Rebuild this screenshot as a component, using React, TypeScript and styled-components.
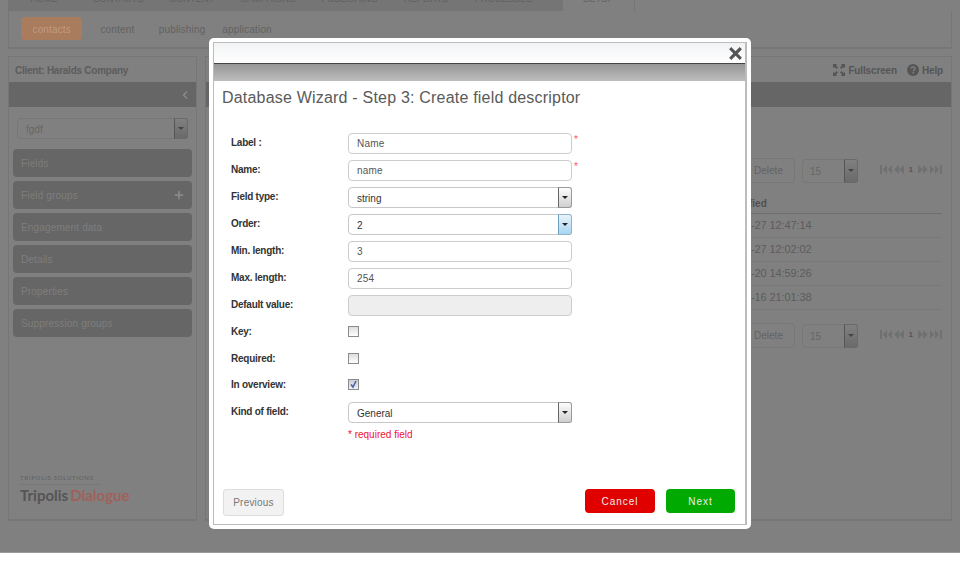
import { ChevronLeft, Plus } from 'lucide-react';
import styled, { createGlobalStyle } from 'styled-components';

const GlobalStyle = createGlobalStyle`
  html, body {
    margin: 0;
    padding: 0;
    background: #fff;
    height: 569px;
    overflow: hidden;
  }
  * {
    box-sizing: border-box;
  }
  body {
    font-family: 'Liberation Sans', Arial, sans-serif;
  }
`;

const Page = styled.div`
  position: relative;
  height: 553px;
  padding: 0 8px;
  overflow: hidden;
  border-bottom: 1px solid #999;
  background: #808080;
`;

const Nav = styled.nav`
  display: flex;
  height: 11px;
  overflow: hidden;
`;

const NavTabs = styled.div`
  display: flex;
  width: 555px;
  height: 11px;
  background: #757575;
  padding-left: 22px;
  gap: 26px;
`;

const NavTab = styled.span`
  display: block;
  margin-top: -8px;
  font-size: 9.3px;
  line-height: 14px;
  color: #606060;
  text-transform: uppercase;
  white-space: nowrap;
  &:first-child {
    margin-right: 9px;
  }
`;

const SetupTab = styled.div`
  width: 72px;
  height: 11px;
  border-right: 1px solid #767676;
  text-align: center;
  ${NavTab} {
    margin-right: 0;
  }
`;

const SubNav = styled.div`
  display: flex;
  align-items: center;
  height: 38px;
  padding: 0 12px 1px;
  border: 1px solid #767676;
  border-top: 0;
  border-bottom-width: 2px;
  border-bottom-right-radius: 2px;
`;

const SubItem = styled.span<{ $active?: boolean; $gap: number }>`
  display: flex;
  align-items: center;
  justify-content: center;
  height: 23px;
  padding: 1px ${(p) => (p.$active ? '11.5px' : '0')} 0;
  margin-right: ${(p) => p.$gap}px;
  border-radius: 4px;
  background: ${(p) => (p.$active ? '#a97c5e' : 'transparent')};
  color: ${(p) => (p.$active ? '#c09a80' : '#626262')};
  font-size: 10px;
  letter-spacing: 0.15px;
`;

const Panels = styled.div`
  display: grid;
  grid-template-columns: 189px 747px;
  gap: 8px;
  margin-top: 7px;
  height: 465px;
`;

const Panel = styled.section`
  display: flex;
  flex-direction: column;
  border: 1px solid #767676;
  border-bottom-width: 2px;
`;

const PanelHeader = styled.header`
  display: flex;
  align-items: center;
  height: 25px;
  padding: 1px 8px 0 6px;
  font-size: 10px;
  font-weight: bold;
  letter-spacing: -0.25px;
  color: #5c5c5c;
`;

const HeaderAction = styled.span`
  display: flex;
  align-items: center;
  gap: 3px;
  margin-left: 10px;
  letter-spacing: -0.15px;
  color: #555;
  &:first-child {
    margin-left: auto;
  }
`;

const DarkBar = styled.div`
  display: flex;
  align-items: center;
  justify-content: flex-end;
  flex: none;
  height: 25px;
  padding-right: 5px;
  background: #666;
  color: #8a8a8a;
`;

const SideBody = styled.div`
  display: flex;
  flex-direction: column;
  flex: 1;
  padding: 11px 4px 0;
`;

const Select = styled.div<{ $muted?: boolean }>`
  display: flex;
  align-items: center;
  justify-content: space-between;
  height: 21px;
  padding-left: 8px;
  border: 1px solid ${(p) => (p.$muted ? '#777' : '#c8c8c8')};
  border-radius: 4px;
  background: ${(p) => (p.$muted ? 'transparent' : '#fff')};
  font-size: 10px;
  color: ${(p) => (p.$muted ? '#666' : '#333')};
`;

const SelectValue = styled.span`
  line-height: 21px;
  padding-top: 1px;
`;

const ArrowBox = styled.span<{ $focus?: boolean; $muted?: boolean }>`
  display: flex;
  align-items: center;
  justify-content: center;
  width: 14px;
  height: 21px;
  margin-right: -1px;
  border: 1px solid ${(p) => (p.$muted ? '#6a6a6a' : p.$focus ? '#8fb4cc' : '#999')};
  border-left-color: ${(p) => (p.$muted ? '#555' : p.$focus ? '#6f9fc0' : '#666')};
  border-radius: 0 3px 3px 0;
  background: ${(p) =>
    p.$muted
      ? 'linear-gradient(#808080, #6a6a6a)'
      : p.$focus
        ? 'linear-gradient(#e8f4fb, #a6d6f2)'
        : 'linear-gradient(#fdfdfd, #cfcfcf)'};
  &::after {
    content: '';
    border-left: 3px solid transparent;
    border-right: 3px solid transparent;
    border-top: 3px solid ${(p) => (p.$muted ? '#444' : '#222')};
  }
`;

const SideSelect = styled(Select)`
  margin: 0 4px 10px;
`;

const SideList = styled.div`
  display: flex;
  flex-direction: column;
  gap: 4px;
`;

const SideItem = styled.div`
  display: flex;
  align-items: center;
  justify-content: space-between;
  height: 28px;
  padding: 0 7px 0 8px;
  border-radius: 4px;
  background: #666;
  font-size: 10px;
  letter-spacing: 0.15px;
  color: #7e7e7e;
`;

const Logo = styled.div`
  margin: auto 0 14px 7px;
`;

const LogoTop = styled.div`
  width: 80px;
  padding-bottom: 2px;
  border-bottom: 1px solid #777;
  font-family: Lato, sans-serif;
  font-size: 6px;
  line-height: 8px;
  letter-spacing: 0.75px;
  color: #5f5f5f;
`;

const LogoName = styled.div`
  font-family: Lato, sans-serif;
  font-size: 15px;
  line-height: 20px;
  font-weight: bold;
  color: #555;
`;

const LogoAccent = styled.span`
  margin-left: 2px;
  color: #a0605a;
`;

const MainBody = styled.div`
  width: 216px;
  margin-left: auto;
  padding: 51px 9px 0 0;
`;

const Toolbar = styled.div`
  display: flex;
  align-items: center;
  height: 25px;
  &:last-child {
    margin-top: 13px;
  }
`;

const GhostButton = styled.span`
  display: flex;
  align-items: center;
  justify-content: center;
  flex: none;
  width: 60px;
  height: 25px;
  margin-right: 7px;
  padding-left: 7px;
  border: 1px solid #777;
  border-radius: 4px;
  font-size: 10px;
  color: #636363;
`;

const PageSelect = styled(Select)`
  width: 56px;
  height: 24px;
  padding-left: 7px;
  ${ArrowBox} {
    height: 24px;
  }
`;

const Pager = styled.span`
  display: flex;
  align-items: center;
  gap: 4px;
  margin-left: 22px;
  margin-top: -3px;
  font-size: 8px;
  font-weight: bold;
  color: #555;
`;

const Table = styled.div`
  margin-top: 9px;
`;

const HeadCell = styled.div`
  height: 22px;
  padding: 6px 0 0 14px;
  border-bottom: 1px solid #6e6e6e;
  font-size: 10px;
  line-height: 12px;
  font-weight: bold;
  color: #505050;
`;

const Cell = styled.div`
  height: 24px;
  padding-left: 10px;
  border-bottom: 1px solid #787878;
  font-size: 11px;
  line-height: 23px;
  letter-spacing: -0.1px;
  color: #5c5c5c;
`;

const Modal = styled.div`
  position: absolute;
  left: 209px;
  top: 38px;
  width: 542px;
  height: 491px;
  padding: 4px;
  border-radius: 5px;
  background: #fff;
`;

const ModalInner = styled.div`
  display: flex;
  flex-direction: column;
  height: 100%;
  border: 1px solid #bcbcbc;
  border-right-width: 2px;
`;

const ModalTop = styled.div`
  display: flex;
  align-items: center;
  justify-content: flex-end;
  flex: none;
  height: 21px;
  padding-right: 3px;
  border-bottom: 1px solid #444;
  background: linear-gradient(#f1f3f5, #fff);
`;

const ModalBand = styled.div`
  flex: none;
  height: 17px;
  background: linear-gradient(#969696, #bdbdbd);
`;

const ModalContent = styled.div`
  display: flex;
  flex-direction: column;
  flex: 1;
  padding: 7px 10px 8px 8px;
`;

const Title = styled.h1`
  margin: 0 0 25px;
  font-size: 16px;
  line-height: 20px;
  font-weight: normal;
  letter-spacing: 0.2px;
  color: #5a5a5a;
`;

const Form = styled.div`
  display: flex;
  flex-direction: column;
  padding-left: 9px;
`;

const Row = styled.div<{ $height?: number }>`
  display: grid;
  grid-template-columns: 117px 224px 10px;
  height: ${(p) => p.$height ?? 27}px;
`;

const Label = styled.label`
  padding-top: 1px;
  font-size: 10px;
  line-height: 18px;
  font-weight: bold;
  letter-spacing: -0.25px;
  color: #333;
`;

const Input = styled.div<{ $disabled?: boolean }>`
  height: 21px;
  padding-left: 8px;
  border: 1px solid #ccc;
  border-radius: 4px;
  background: ${(p) => (p.$disabled ? '#eee' : '#fff')};
  font-size: 10px;
  line-height: 19px;
  letter-spacing: 0.2px;
  color: #555;
`;

const Star = styled.span`
  padding-left: 2px;
  font-size: 10px;
  line-height: 14px;
  color: #f55;
`;

const CheckBox = styled.span<{ $checked?: boolean }>`
  display: flex;
  align-items: center;
  justify-content: center;
  width: 11px;
  height: 11px;
  margin-top: 4px;
  border: 1px solid #8b8b8b;
  background: ${(p) =>
    p.$checked ? 'linear-gradient(#c9cfdc, #eef0f5)' : 'linear-gradient(#ddd, #fff)'};
`;

const RequiredNote = styled.div`
  margin: 6px 0 0 117px;
  font-size: 10px;
  line-height: 12px;
  color: #f01030;
`;

const Footer = styled.div`
  display: flex;
  align-items: flex-start;
  justify-content: space-between;
  margin-top: auto;
`;

const PrevButton = styled.button`
  width: 61px;
  height: 27px;
  margin-left: 1px;
  padding: 0;
  border: 1px solid #ddd;
  border-radius: 3px;
  background: #f2f2f2;
  font-family: inherit;
  font-size: 10px;
  letter-spacing: 0.2px;
  color: #777;
`;

const Actions = styled.div`
  display: flex;
  gap: 11px;
`;

const ActionButton = styled.button<{ $color: string; $width: number }>`
  width: ${(p) => p.$width}px;
  height: 24px;
  padding: 0;
  border: 0;
  border-radius: 4px;
  background: ${(p) => p.$color};
  font-family: inherit;
  font-size: 10px;
  letter-spacing: 1px;
  color: #eee;
`;

const CloseIcon = () => (
  <svg width="13" height="13" viewBox="0 0 14 14">
    <path d="M2.5 2.5l9 9M11.500 2.500l-9 9" stroke="#555" strokeWidth="3.400" strokeLinecap="square" />
  </svg>
);

const FullscreenIcon = () => (
  <svg width="12" height="12" viewBox="0 0 12 12" fill="#555">
    <path d="M0 0h4L3 1.500 5 3.500 3.500 5 1.500 3 0 4zM12 0v4l-1.500-1L8.500 5 7 3.500 9 1.500 8 0zM0 12V8l1.500 1L3.500 7 5 8.500 3 10.500 4 12zM12 12H8l1-1.500L7 8.500 8.500 7l2 2L12 8z" />
  </svg>
);

const HelpIcon = () => (
  <svg width="12" height="12" viewBox="0 0 12 12">
    <circle cx="6" cy="6" r="6" fill="#555" />
    <path d="M4 4.600C4 3.400 5 3 6 3c1.200 0 2 .6 2 1.600 0 1.400-1.700 1.300-1.700 2.600" fill="none" stroke="#808080" strokeWidth="1.300" />
    <rect x="5.500" y="8" width="1.500" height="1.500" fill="#808080" />
  </svg>
);

const PagerArrows = ({ flip }: { flip?: boolean }) => (
  <svg width="25" height="9" viewBox="0 0 25 9" fill="#707070" transform={flip ? 'scale(-1 1)' : undefined}>
    <path d="M0 0h2v9H0zM7 0v9L3 4.500zM12 0v9L8 4.500zM19 0v9l-5-4.500zM24 0v9l-5-4.500z" />
  </svg>
);

const CheckMark = () => (
  <svg width="9" height="9" viewBox="0 0 9 9">
    <path d="M2 4.500l2 2.500 3-6" fill="none" stroke="#4a5f9c" strokeWidth="1.500" />
  </svg>
);

const navTabs = ['Home', 'Contacts', 'Content', 'Campaigns', 'Publishing', 'Reports', 'Processes'];
const sideItems = ['Fields', 'Field groups', 'Engagement data', 'Details', 'Properties', 'Suppression groups'];
const modified = ['5-27 12:47:14', '5-27 12:02:02', '1-20 14:59:26', '6-16 21:01:38'];

const PageToolbar = () => (
  <Toolbar>
    <GhostButton>Delete</GhostButton>
    <PageSelect $muted>
      <SelectValue>15</SelectValue>
      <ArrowBox $muted />
    </PageSelect>
    <Pager>
      <PagerArrows />
      1
      <PagerArrows flip />
    </Pager>
  </Toolbar>
);

export default function App() {
  return (
    <>
      <GlobalStyle />
      <Page>
        <Nav>
          <NavTabs>
            {navTabs.map((tab) => (
              <NavTab key={tab}>{tab}</NavTab>
            ))}
          </NavTabs>
          <SetupTab>
            <NavTab>Setup</NavTab>
          </SetupTab>
        </Nav>
        <SubNav>
          <SubItem $active $gap={18}>contacts</SubItem>
          <SubItem $gap={24.5}>content</SubItem>
          <SubItem $gap={17}>publishing</SubItem>
          <SubItem $gap={0}>application</SubItem>
        </SubNav>
        <Panels>
          <Panel>
            <PanelHeader>Client: Haralds Company</PanelHeader>
            <DarkBar>
              <ChevronLeft size={12} strokeWidth={3} />
            </DarkBar>
            <SideBody>
              <SideSelect $muted>
                <SelectValue>fgdf</SelectValue>
                <ArrowBox $muted />
              </SideSelect>
              <SideList>
                {sideItems.map((item) => (
                  <SideItem key={item}>
                    {item}
                    {item === 'Field groups' && <Plus size={12} strokeWidth={3.5} color="#8a8a8a" />}
                  </SideItem>
                ))}
              </SideList>
              <Logo>
                <LogoTop>TRIPOLIS SOLUTIONS</LogoTop>
                <LogoName>
                  Tripolis<LogoAccent>Dialogue</LogoAccent>
                </LogoName>
              </Logo>
            </SideBody>
          </Panel>
          <Panel>
            <PanelHeader>
              <HeaderAction>
                <FullscreenIcon />
                Fullscreen
              </HeaderAction>
              <HeaderAction>
                <HelpIcon />
                Help
              </HeaderAction>
            </PanelHeader>
            <DarkBar />
            <MainBody>
              <PageToolbar />
              <Table>
                <HeadCell>fied</HeadCell>
                {modified.map((date) => (
                  <Cell key={date}>{date}</Cell>
                ))}
              </Table>
              <PageToolbar />
            </MainBody>
          </Panel>
        </Panels>
        <Modal>
          <ModalInner>
            <ModalTop>
              <CloseIcon />
            </ModalTop>
            <ModalBand />
            <ModalContent>
              <Title>Database Wizard - Step 3: Create field descriptor</Title>
              <Form>
                <Row>
                  <Label>Label :</Label>
                  <Input>Name</Input>
                  <Star>*</Star>
                </Row>
                <Row>
                  <Label>Name:</Label>
                  <Input>name</Input>
                  <Star>*</Star>
                </Row>
                <Row>
                  <Label>Field type:</Label>
                  <Select>
                    <SelectValue>string</SelectValue>
                    <ArrowBox />
                  </Select>
                </Row>
                <Row>
                  <Label>Order:</Label>
                  <Select>
                    <SelectValue>2</SelectValue>
                    <ArrowBox $focus />
                  </Select>
                </Row>
                <Row>
                  <Label>Min. length:</Label>
                  <Input>3</Input>
                </Row>
                <Row>
                  <Label>Max. length:</Label>
                  <Input>254</Input>
                </Row>
                <Row>
                  <Label>Default value:</Label>
                  <Input $disabled />
                </Row>
                <Row>
                  <Label>Key:</Label>
                  <CheckBox />
                </Row>
                <Row $height={26}>
                  <Label>Required:</Label>
                  <CheckBox />
                </Row>
                <Row>
                  <Label>In overview:</Label>
                  <CheckBox $checked>
                    <CheckMark />
                  </CheckBox>
                </Row>
                <Row $height={21}>
                  <Label>Kind of field:</Label>
                  <Select>
                    <SelectValue>General</SelectValue>
                    <ArrowBox />
                  </Select>
                </Row>
                <RequiredNote>* required field</RequiredNote>
              </Form>
              <Footer>
                <PrevButton>Previous</PrevButton>
                <Actions>
                  <ActionButton $color="#e00000" $width={70}>Cancel</ActionButton>
                  <ActionButton $color="#00aa00" $width={69}>Next</ActionButton>
                </Actions>
              </Footer>
            </ModalContent>
          </ModalInner>
        </Modal>
      </Page>
    </>
  );
}
